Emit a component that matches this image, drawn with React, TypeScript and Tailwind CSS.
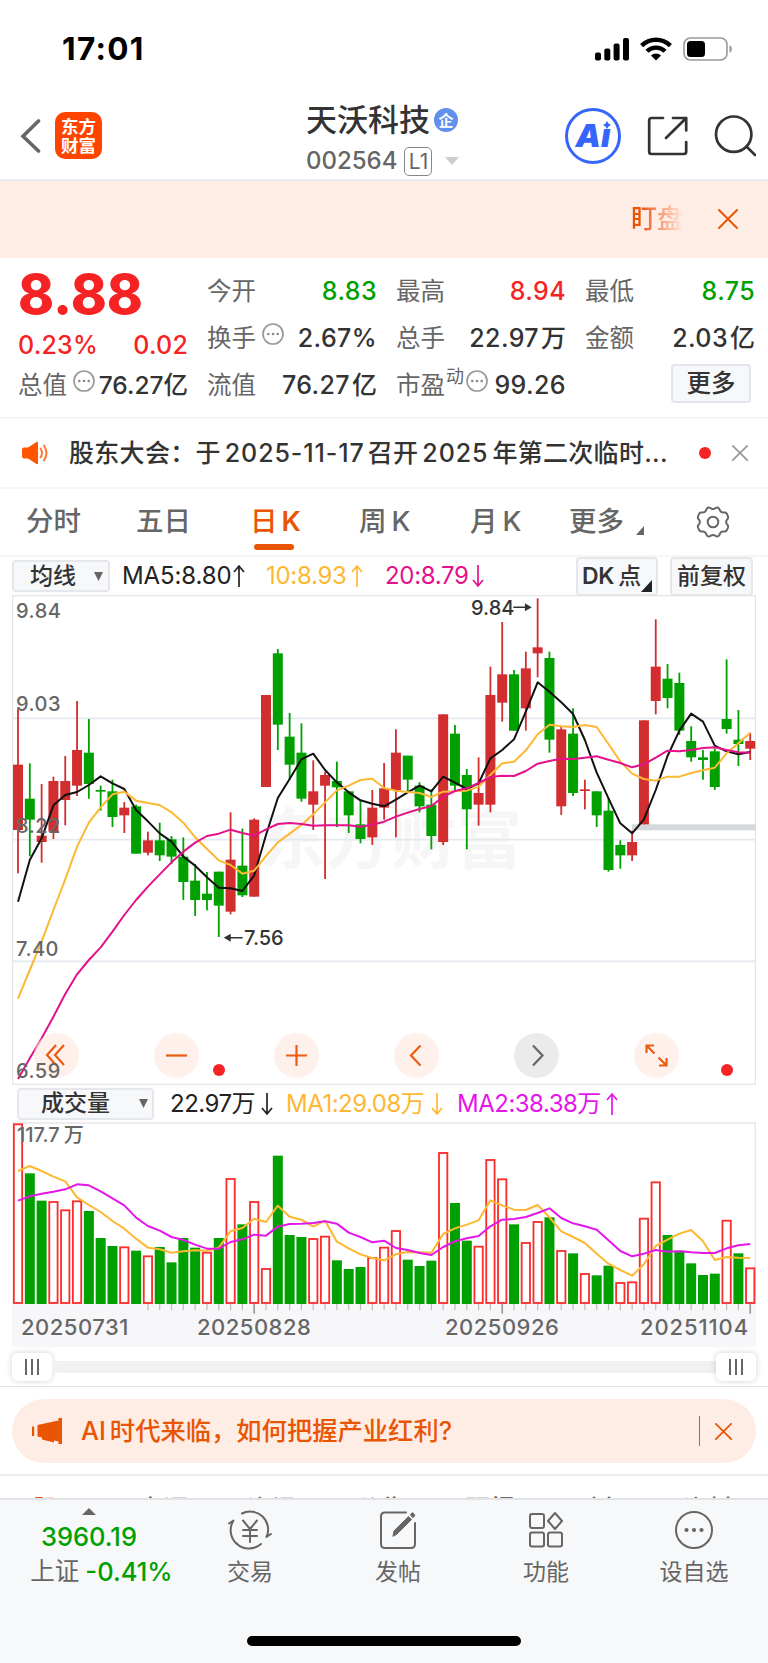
import type { ReactNode } from "react";

// [direction, high, bodyTop, bodyBottom, low]
type Candle = [string, number, number, number, number];

const STEP = 35.43;
const cx = (i: number) => 18 + STEP * i;

const candles: Candle[] = [
  ["r", 355, 524, 720, 850], ["g", 520, 626, 689, 799], ["r", 582, 737, 756, 818],
  ["r", 560, 573, 725, 747], ["r", 498, 573, 630, 706], ["r", 333, 480, 587, 618],
  ["g", 387, 488, 582, 626], ["g", 587, 600, 605, 662], ["g", 569, 604, 681, 711],
  ["r", 636, 653, 676, 729], ["g", 644, 649, 791, 791], ["r", 725, 751, 788, 796],
  ["g", 698, 751, 796, 813], ["g", 738, 748, 800, 822], ["g", 742, 800, 876, 930],
  ["g", 822, 872, 930, 978], ["g", 846, 911, 930, 961], ["g", 845, 845, 947, 1041],
  ["r", 667, 809, 965, 973], ["g", 716, 827, 916, 921], ["r", 685, 689, 920, 920],
  ["r", 315, 315, 591, 591], ["g", 177, 190, 404, 480], ["g", 369, 440, 524, 569],
  ["g", 400, 488, 626, 635], ["r", 511, 604, 644, 720], ["r", 545, 555, 587, 867],
  ["g", 515, 573, 592, 711], ["g", 604, 604, 676, 729], ["g", 630, 703, 747, 760],
  ["r", 600, 653, 742, 765], ["r", 519, 595, 653, 689], ["r", 418, 488, 600, 742],
  ["g", 497, 497, 569, 604], ["g", 577, 587, 649, 667], ["g", 598, 644, 738, 778],
  ["r", 373, 373, 756, 765], ["g", 405, 431, 587, 604], ["g", 537, 555, 658, 778],
  ["r", 502, 609, 644, 707], ["r", 230, 315, 644, 667], ["r", 96, 253, 338, 395],
  ["g", 240, 253, 422, 422], ["r", 185, 235, 355, 422], ["r", 25, 172, 190, 262],
  ["g", 185, 204, 449, 488], ["r", 410, 418, 649, 675], ["g", 355, 431, 609, 618],
  ["r", 569, 598, 603, 658], ["g", 604, 604, 676, 711], ["g", 625, 662, 840, 845],
  ["g", 751, 765, 796, 836], ["r", 722, 756, 796, 813], ["r", 391, 391, 703, 703],
  ["r", 88, 230, 333, 373], ["g", 222, 266, 324, 355], ["g", 248, 279, 422, 435],
  ["g", 409, 453, 502, 515], ["g", 480, 502, 510, 569], ["g", 475, 484, 591, 600],
  ["g", 208, 387, 417, 431], ["g", 360, 449, 462, 528], ["r", 428, 453, 476, 510],
];

const ma5 = [
  935, 810, 745, 646, 615, 606, 585, 559, 580, 597, 660, 694, 730, 755, 800, 827, 862, 893, 895, 903, 856,
  735, 624, 567, 508, 491, 540, 577, 607, 631, 641, 649, 629, 607, 587, 604, 560, 578, 597, 580, 505, 480,
  448, 365, 277, 305, 337, 372, 450, 548, 625, 700, 730, 688, 600, 498, 422, 371, 395, 467, 484, 493, 486,
];
const ma10 = [
  1226, 1140, 1055, 960, 868, 770, 698, 652, 613, 605, 632, 639, 645, 667, 698, 742, 777, 811, 825, 851, 842,
  798, 757, 731, 705, 673, 637, 601, 587, 570, 566, 594, 602, 606, 609, 621, 605, 604, 602, 590, 555, 520,
  515, 481, 433, 404, 409, 411, 405, 411, 462, 515, 551, 567, 572, 560, 560, 549, 541, 533, 490, 460, 428,
];
const ma20 = [
  1467, 1405, 1345, 1280, 1212, 1153, 1110, 1072, 1025, 975, 930, 890, 853, 817, 785, 758, 738, 731, 719, 729, 737,
  718, 702, 699, 702, 707, 706, 706, 706, 710, 704, 695, 680, 668, 657, 648, 620, 603, 595, 579, 561, 557,
  558, 543, 521, 513, 506, 507, 503, 499, 509, 519, 532, 523, 503, 482, 484, 480, 474, 472, 480, 487, 488,
];

const volumes = [
  "r131", "g280", "g362", "r364", "r389", "r362", "g393", "g474", "g498", "r500", "g512", "r527", "g501",
  "g547", "g474", "g503", "r516", "g474", "r295", "g433", "r364", "r565", "g227", "g465", "g471", "r475",
  "r468", "g541", "g567", "g561", "r532", "r501", "r451", "g539", "g558", "g542", "r217", "g369", "g482",
  "r498", "r238", "r296", "g433", "r487", "r424", "g412", "r511", "g520", "r580", "g586", "g557", "r607",
  "r605", "r414", "r305", "g465", "g512", "g550", "g585", "g581", "r420", "g520", "r563",
];
const volMa1 = [
  273, 258, 273, 290, 304, 352, 375, 396, 423, 446, 476, 503, 508, 518, 514, 511, 512, 503, 454, 444, 416,
  426, 377, 410, 419, 440, 422, 485, 505, 523, 534, 541, 523, 516, 517, 518, 462, 445, 434, 421, 361, 376,
  389, 390, 375, 412, 454, 471, 489, 521, 551, 570, 587, 553, 498, 479, 461, 450, 484, 540, 531, 533, 534,
];
const volMa2 = [
  362, 349, 341, 335, 328, 313, 316, 334, 355, 376, 413, 438, 452, 471, 480, 494, 506, 506, 486, 478, 464,
  467, 440, 432, 431, 429, 424, 431, 458, 471, 487, 482, 504, 510, 519, 525, 501, 484, 475, 468, 439, 419,
  417, 411, 399, 385, 414, 430, 439, 449, 481, 513, 529, 521, 510, 515, 514, 517, 519, 519, 505, 496, 492,
];

const toPoints = (ys: number[]) => ys.map((y, i) => `${cx(i)},${y}`).join(" ");

const Line = ({ ys, color }: { ys: number[]; color: string }) => (
  <polyline points={toPoints(ys)} fill="none" stroke={color} strokeWidth="6" strokeLinejoin="round" />
);

const Arrow = ({ down }: { down?: boolean }) => (
  <svg width="12" height="24" viewBox="0 0 12 24" className={down ? "rotate-180" : ""} fill="none" stroke="currentColor" strokeWidth="1.7">
    <path d="M6 23V2M1 8l5-6 5 6" />
  </svg>
);

const Close = ({ size, width = 2 }: { size: number; width?: number }) => (
  <svg width={size} height={size} viewBox="0 0 20 20" fill="none" stroke="currentColor" strokeWidth={width} strokeLinecap="round">
    <path d="M1 1l18 18M19 1L1 19" />
  </svg>
);

const Info = () => (
  <svg width="22" height="22" viewBox="0 0 22 22" fill="none" stroke="#999" strokeWidth="1.7" className="shrink-0">
    <circle cx="11" cy="11" r="10" />
    <g fill="#888" stroke="none">
      <circle cx="6.3" cy="11" r="1.3" />
      <circle cx="11" cy="11" r="1.3" />
      <circle cx="15.7" cy="11" r="1.3" />
    </g>
  </svg>
);

const StatusBar = () => (
  <div className="flex h-[98px] items-center justify-between pl-[62px] pr-[36px]">
    <div className="text-[31.5px] font-bold leading-none tracking-[1.3px] text-black">17:01</div>
    <div className="flex items-center gap-[11px]">
      <svg width="34" height="23" viewBox="0 0 34 23">
        <rect x="0" y="14.5" width="6" height="8" rx="2" />
        <rect x="9.3" y="10.5" width="6" height="12" rx="2" />
        <rect x="18.6" y="5.5" width="6" height="17" rx="2" />
        <rect x="28" y="0" width="6" height="22.5" rx="2" />
      </svg>
      <svg width="32" height="24" viewBox="0 0 32 24" fill="none" stroke="#000" strokeWidth="4.4">
        <path d="M1.6 8.6a20.5 20.5 0 0 1 28.8 0" />
        <path d="M7 14.3a12.8 12.8 0 0 1 18 0" />
        <path d="M16 23.5l-5-5a7 7 0 0 1 10 0z" fill="#000" stroke="none" />
      </svg>
      <svg width="49" height="24" viewBox="0 0 49 24">
        <rect x="1" y="1" width="43" height="22" rx="6.5" fill="none" stroke="#999" strokeWidth="1.6" />
        <rect x="4" y="4" width="18" height="16" rx="3.5" />
        <path d="M46.5 8.2c1.6.6 2.4 2 2.4 3.8s-.8 3.2-2.4 3.8z" fill="#999" />
      </svg>
    </div>
  </div>
);

const Header = () => (
  <div className="flex h-[83px] border-b-2 border-[#ececee] pl-[20px]">
    <svg width="22" height="34" viewBox="0 0 22 34" className="mt-[21px]" fill="none" stroke="#666" strokeWidth="3.6" strokeLinecap="round">
      <path d="M18.5 2L3 17.200 18.5 32" />
    </svg>
    <div className="ml-[13px] mt-[14px] flex h-[47px] w-[47px] flex-col items-center justify-center rounded-[10px] bg-[#ff4400] text-[17.5px] font-bold leading-[19px] text-white">
      <span>东方</span>
      <span>财富</span>
    </div>
    <div className="ml-[204px] mt-[4px] w-[186px]">
      <div className="flex h-[36px] items-center">
        <span className="text-[31px] font-medium leading-[36px] text-[#333]">天沃科技</span>
        <span className="ml-[4px] flex h-[24px] w-[24px] items-center justify-center rounded-full bg-[#628fea] text-[15px] font-bold leading-none text-white">企</span>
      </div>
      <div className="mt-[8px] flex h-[30px] items-center text-[#666]">
        <span className="text-[24px] font-medium leading-none">002564</span>
        <span className="ml-[7px] flex h-[29px] w-[28px] items-center justify-center rounded-[5px] border-[1.5px] border-[#888] text-[21px] leading-none">L1</span>
        <svg width="14" height="8" className="ml-[13px]">
          <path d="M0 0h14l-7 8z" fill="#ccc" />
        </svg>
      </div>
    </div>
    <div className="relative ml-[73px] mt-[10px] flex h-[56px] w-[56px] items-center justify-center rounded-full border-[3px] border-[#3565fb] text-[#3565fb]">
      <span className="text-[32px] font-black italic leading-none">Aı</span>
      <svg width="8" height="8" viewBox="0 0 8 8" className="absolute left-[35px] top-[10px]">
        <path d="M4 0l1.5 2.5L8 4 5.5 5.5 4 8 2.5 5.5 0 4l2.5-1.500z" fill="currentColor" />
      </svg>
    </div>
    <svg width="42" height="42" viewBox="0 0 42 42" className="ml-[26px] mt-[17px]" fill="none" stroke="#333" strokeWidth="2.7" strokeLinecap="round" strokeLinejoin="round">
      <path d="M16 3H4.5Q2.200 3 2.200 5.500V36.500Q2.200 39 4.500 39H37Q39.200 39 39.200 36.500V27" />
      <path d="M26 3H39.200V15.500M39.200 3L19 23" />
    </svg>
    <svg width="42" height="44" viewBox="0 0 42 44" className="ml-[25px] mt-[16px]" fill="none" stroke="#333" strokeWidth="2.7" strokeLinecap="round">
      <circle cx="19.7" cy="20.2" r="17.7" />
      <path d="M32.5 32.500L41 41" />
    </svg>
  </div>
);

const Label = ({ children }: { children: ReactNode }) => (
  <span className="text-[24.5px] leading-none text-[#666]">{children}</span>
);

const Stat = ({ label, value, unit, color = "text-[#333]", children }: { label: string; value: string; unit?: string; color?: string; children?: ReactNode }) => (
  <div className="flex items-center whitespace-nowrap">
    <Label>{label}</Label>
    {children}
    <span className={`ml-auto text-[25px] font-medium leading-none tracking-[0.4px] ${color}`}>
      {value}
      {unit && <span className="ml-[2px] tracking-normal">{unit}</span>}
    </span>
  </div>
);

const Quote = () => (
  <div className="grid h-[161px] grid-cols-[repeat(4,170px)] grid-rows-[repeat(3,47px)] gap-x-[19px] border-b-2 border-[#f5f5f5] pl-[18px] pt-[10px]">
    <div className="flex items-center pt-[6px] text-[54.5px] font-extrabold leading-none text-[#f52323]">8.88</div>
    <Stat label="今开" value="8.83" color="text-[#00a000]" />
    <Stat label="最高" value="8.94" color="text-[#f52323]" />
    <Stat label="最低" value="8.75" color="text-[#00a000]" />
    <div className="flex items-center justify-between pt-[14px] text-[25px] font-medium leading-none tracking-[0.2px] text-[#f52323]">
      <span>0.23%</span>
      <span>0.02</span>
    </div>
    <Stat label="换手" value="2.67%">
      <span className="-mt-[10px] ml-[6px]"><Info /></span>
    </Stat>
    <Stat label="总手" value="22.97" unit="万" />
    <Stat label="金额" value="2.03" unit="亿" />
    <div className="flex items-center whitespace-nowrap">
      <Label>总值</Label>
      <span className="-mt-[10px] ml-[6px]"><Info /></span>
      <span className="ml-auto text-[24.5px] font-medium leading-none text-[#333]">76.27亿</span>
    </div>
    <Stat label="流值" value="76.27" unit="亿" />
    <Stat label="市盈" value="99.26">
      <span className="-mt-[18px] ml-[1px] text-[18px] leading-none text-[#666]">动</span>
      <span className="-mt-[10px] ml-[2px]"><Info /></span>
    </Stat>
    <div className="ml-auto mr-[4px] mt-[2px] flex h-[39px] w-[80px] items-center justify-center rounded-[4px] border-2 border-[#e3e5ec] bg-[#f7f8fa] text-[24.5px] font-medium leading-none text-[#333]">
      更多
    </div>
  </div>
);

const News = () => (
  <div className="flex h-[70px] items-center border-b-2 border-[#f5f5f5] pl-[22px] pr-[20px]">
    <svg width="27" height="24" viewBox="0 0 27 24" className="shrink-0">
      <path d="M2 6.5H6L14.5 1Q16 .3 16 2V22Q16 23.7 14.5 23L6 17.500H2Q0 17.500 0 15.500V8.500Q0 6.500 2 6.500z" fill="#ff5500" />
      <path d="M18.5 7.500q3 4.500 0 9M22 4.500q5 7.500 0 15" fill="none" stroke="#ff7a33" strokeWidth="2" strokeLinecap="round" />
    </svg>
    <div className="ml-[20px] w-[606px] whitespace-nowrap text-[25px] font-medium leading-none tracking-[0.3px] text-[#333]">
      股东大会：于<span className="ml-[4px] mr-[3px] tracking-[0.900px]">2025-11-17</span>召开<span className="ml-[4px] mr-[4px] tracking-[0.9px]">2025</span>年第二次临时...
    </div>
    <div className="ml-[24px] h-[12px] w-[12px] rounded-full bg-[#f52323]" />
    <div className="ml-auto text-[#999]"><Close size={16} width={2.2} /></div>
  </div>
);

const Tabs = () => (
  <div className="flex h-[68px] items-center border-b-2 border-[#f5f5f5] pb-[1px] pl-[26px] pr-[38px] text-[27.5px] font-medium leading-none text-[#666]">
    <div className="w-[110px]">分时</div>
    <div className="w-[114px]">五日</div>
    <div className="relative w-[109px] text-[#ea5504]">
      日<span className="ml-[4px] font-semibold">K</span>
      <div className="absolute -bottom-[15px] left-[4px] h-[6px] w-[40px] rounded-[3px] bg-[#ea5504]" />
    </div>
    <div className="w-[111px]">周<span className="ml-[5px]">K</span></div>
    <div className="w-[99px]">月<span className="ml-[5px]">K</span></div>
    <div className="flex items-end">
      更多
      <svg width="8" height="9" className="ml-[12px]">
        <path d="M8 0v9H0z" fill="#666" />
      </svg>
    </div>
    <svg width="34" height="32" viewBox="0 0 34 32" className="ml-auto" fill="none" stroke="#666" strokeWidth="2" strokeLinejoin="round">
      <path d="M11 2.500Q12 1 13.500 1.700L15.500 2.700Q17 3.300 18.500 2.700L20.500 1.700Q22 1 23 2.500L24.500 5.200Q25.300 6.400 27 6.500L29 6.600Q30.300 6.800 31 8L32 10.500Q32.500 12 31.500 13L30.500 14.500Q29.800 16 30.500 17.500L31.500 19Q32.500 20 32 21.500L31 24Q30.300 25.200 29 25.400L27 25.500Q25.300 25.600 24.500 26.800L23 29.500Q22 31 20.500 30.300L18.500 29.300Q17 28.700 15.500 29.300L13.500 30.300Q12 31 11 29.500L9.500 26.800Q8.700 25.600 7 25.500L5 25.400Q3.700 25.200 3 24L2 21.500Q1.500 20 2.500 19L3.500 17.500Q4.200 16 3.500 14.500L2.500 13Q1.500 12 2 10.500L3 8Q3.700 6.800 5 6.600L7 6.500Q8.700 6.400 9.500 5.200z" />
      <circle cx="17" cy="16" r="5.3" />
    </svg>
  </div>
);

const SelectBtn = ({ label, className }: { label: string; className: string }) => (
  <div className={`flex h-[32px] shrink-0 items-center justify-between rounded-[4px] border-2 border-[#e6e7ec] bg-[#f7f8fa] text-[23px] font-medium leading-none tracking-normal text-[#333] ${className}`}>
    {label}
    <svg width="9" height="9"><path d="M0 0h9L4.5 9z" fill="#666" /></svg>
  </div>
);

const MaRow = () => (
  <div className="flex h-[38px] items-center whitespace-nowrap pl-[12px] text-[24px] leading-none tracking-[-0.3px]">
    <SelectBtn label="均线" className="w-[98px] pl-[16px] pr-[5px]" />
    <span className="ml-[12px] w-[106px] shrink-0 tracking-[-0.1px] text-[#222]">MA5:8.80</span>
    <span className="ml-[5px] w-[33px] shrink-0 text-[#222]"><Arrow /></span>
    <span className="w-[80px] shrink-0 text-[#fdb833]">10:8.93</span>
    <span className="ml-[5px] w-[34px] shrink-0 text-[#fdb833]"><Arrow /></span>
    <span className="w-[82px] shrink-0 text-[#e4118b]">20:8.79</span>
    <span className="ml-[5px] text-[#e4118b]"><Arrow down /></span>
    <div className="relative ml-auto flex h-[39px] w-[82px] shrink-0 items-center rounded-[4px] border-2 border-[#e6e7ec] bg-[#f7f8fa] pl-[4px] text-[23px] font-medium text-[#333]">
      <span className="font-semibold">DK</span><span className="ml-[4px]">点</span>
      <svg width="11" height="12" className="absolute bottom-[2px] right-[4px]"><path d="M11 0v12H0z" fill="#222" /></svg>
    </div>
    <div className="ml-[12px] mr-[15px] flex h-[39px] w-[83px] shrink-0 items-center justify-center rounded-[4px] border-2 border-[#e6e7ec] bg-[#f7f8fa] text-[23px] font-medium tracking-normal text-[#333]">
      前复权
    </div>
  </div>
);

const prices = [
  { v: "9.84", cls: "top-[3.5px]" },
  { v: "9.03", cls: "top-[97px]" },
  { v: "8.22", cls: "top-[219px]" },
  { v: "7.40", cls: "top-[342px]" },
  { v: "6.59", cls: "top-[464px]" },
];

const tools = [
  { d: "M22 12L13 22l9 10M30 12L21 22l9 10", cls: "" },
  { d: "M12 22.500h21", cls: "" },
  { d: "M12 22.500h21M22.500 12v21", cls: "" },
  { d: "M26.500 12.500L17 22.500l9.500 10", cls: "" },
  { d: "M19 12.500l9.500 10-9.500 10", cls: "gray" },
  { d: "M12.500 20V12.500H20M12.500 12.500L20.500 20.500M25 32.500H32.500V25M32.500 32.500L24.500 24.500", cls: "" },
];

const KChart = () => (
  <div className="relative ml-[12px] h-[490px] w-[744px]">
    <div className="absolute left-[248px] top-[207px] text-[65.5px] font-bold leading-[76px] text-[#f6f6f6]">东方财富</div>
    <svg width="744" height="490" viewBox="0 15 2232 1470" className="absolute inset-0">
      <path d="M0 385H2230M0 749H2230M0 1114H2230" stroke="#e4e9ef" strokeWidth="5" />
      <rect x="2" y="17" width="2228" height="1466" fill="none" stroke="#e4e4e6" strokeWidth="3.500" />
      <rect x="1860" y="703" width="372" height="18" fill="#d4d7db" />
      {candles.map(([dir, high, top, bottom, low], i) => (
        <g key={i} fill={dir === "r" ? "#d22d2f" : "#00a000"}>
          <rect x={cx(i) - 2.7} y={high} width="5.400" height={low - high} />
          <rect x={cx(i) - 15} y={top} width="30" height={bottom - top} />
        </g>
      ))}
      <Line ys={ma5} color="#111" />
      <Line ys={ma10} color="#fdb833" />
      <Line ys={ma20} color="#e4118b" />
      <g stroke="#333" strokeWidth="4.500" fill="#333">
        <path d="M645 1043H692M1504 52H1550" />
        <path d="M640 1043l14-8v16zM1555 52l-14-8v16z" />
      </g>
    </svg>
    <div className="absolute left-[459px] top-[1px] text-[20px] font-medium leading-[24px] text-[#333]">9.84</div>
    <div className="absolute left-[232px] top-[331px] text-[20px] font-medium leading-[24px] text-[#333]">7.56</div>
    <div className="absolute left-[22px] top-[437.5px] flex gap-[75px]">
      {tools.map((t) => (
        <svg key={t.d} width="45" height="45" viewBox="0 0 45 45">
          <circle cx="22.5" cy="22.5" r="22.5" fill={t.cls ? "#e0e0e0" : "#fde6da"} fillOpacity={t.cls ? 0.65 : 0.55} />
          <path d={t.d} fill="none" stroke={t.cls ? "#666" : "#ec5c10"} strokeWidth="2.2" />
        </svg>
      ))}
    </div>
    {prices.map((p) => (
      <div key={p.v} className={`absolute left-[4px] text-[20px] font-medium leading-[24px] tracking-[0.5px] text-[#666] ${p.cls}`}>{p.v}</div>
    ))}
    <div className="absolute left-[200.5px] top-[469px] h-[12px] w-[12px] rounded-full bg-[#f52323]" />
    <div className="absolute left-[708.5px] top-[469px] h-[12px] w-[12px] rounded-full bg-[#f52323]" />
  </div>
);

const VolumeRow = () => (
  <div className="flex h-[37px] items-center whitespace-nowrap pl-[17px] text-[24px] leading-none tracking-[-0.5px]">
    <SelectBtn label="成交量" className="w-[137px] pl-[22px] pr-[4px]" />
    <span className="ml-[16px] w-[84px] shrink-0 text-[#222]">22.97万</span>
    <span className="ml-[7px] w-[25px] shrink-0 text-[#222]"><Arrow down /></span>
    <span className="w-[138px] shrink-0 text-[#fdb833]">MA1:29.08万</span>
    <span className="ml-[7px] w-[26px] shrink-0 text-[#fdb833]"><Arrow down /></span>
    <span className="w-[142px] shrink-0 text-[#e516e8]">MA2:38.38万</span>
    <span className="ml-[7px] text-[#e516e8]"><Arrow /></span>
  </div>
);

const VolumeChart = () => (
  <div className="ml-[12px] w-[744px]">
    <div className="relative h-[182px]">
      <svg width="744" height="182" viewBox="0 126 2232 546">
        <path d="M0 129H2230V672" fill="none" stroke="#e6e6ea" strokeWidth="4" />
        {volumes.map((v, i) => {
          const top = Number(v.slice(1));
          return v[0] === "g" ? (
            <rect key={i} x={cx(i) - 15} y={top} width="30" height={672 - top} fill="#00a000" />
          ) : (
            <rect key={i} x={cx(i) - 12.5} y={top + 2} width="25" height={667 - top} fill="#fff" stroke="#fb2d2d" strokeWidth="5.500" />
          );
        })}
        <Line ys={volMa1} color="#fdb833" />
        <Line ys={volMa2} color="#e516e8" />
      </svg>
      <div className="absolute left-[5px] top-[1px] text-[20px] font-medium leading-[24px] text-[#666]">117.7<span className="ml-[4px]">万</span></div>
    </div>
    <div className="h-[43px] bg-[#f7f7fa]">
      <svg width="744" height="10" viewBox="0 672 2232 30" className="block">
        {volumes.slice(11).map((_, k) => {
          const i = k + 11;
          const major = i === 20 || i === 41 || i === 62;
          return <path key={i} d={`M${cx(i)} 672V${major ? 701 : 690}`} stroke={major ? "#999" : "#bbb"} strokeWidth={major ? 5 : 3.5} />;
        })}
      </svg>
      <div className="flex pl-[9px] pt-[1px] text-[22px] font-medium leading-[24px] tracking-[0.5px] text-[#666]">
        <span className="w-[176px]">20250731</span>
        <span className="w-[248px]">20250828</span>
        <span className="w-[195px]">20250926</span>
        <span className="tracking-[0.9px]">20251104</span>
      </div>
    </div>
  </div>
);

const Handle = () => (
  <div className="flex h-[28px] w-[40px] items-center justify-center gap-[4px] rounded-[6px] bg-white shadow-[0_0_6px_rgba(0,0,0,0.18)]">
    <i className="h-[16px] w-[2px] bg-[#666]" />
    <i className="h-[16px] w-[2px] bg-[#666]" />
    <i className="h-[16px] w-[2px] bg-[#666]" />
  </div>
);

const Slider = () => (
  <div className="flex h-[40px] items-center border-b border-[#e3e3e5] px-[12px]">
    <Handle />
    <div className="h-[12px] flex-1 bg-[#f1f1f4]" />
    <Handle />
  </div>
);

const AiBanner = () => (
  <div className="mx-[12px] mt-[12px] flex h-[64px] items-center rounded-[32px] bg-[#fdede4] pl-[20px] pr-[24px] text-[#ea5504]">
    <svg width="31" height="26" viewBox="0 0 31 26" fill="#ea5504">
      <rect x="0" y="8.5" width="2.2" height="9.5" />
      <path d="M5.500 7L26.500 2.500V0H30V26H26.500V23.500L22 22.500V24.500L10 21.500V19.500L5.500 18.500z" />
    </svg>
    <div className="ml-[18px] whitespace-nowrap text-[25.3px] font-medium leading-none">AI<span className="ml-[4px]">时代来临，如何把握产业红利?</span></div>
    <div className="ml-auto h-[30px] w-[1.5px] bg-[#ea5504]" />
    <div className="ml-[15px]"><Close size={17} width={2} /></div>
  </div>
);

const peekTabs = ["点评", "资讯", "公告", "研报", "财务", "资料"];

const navs = [
  {
    name: "交易",
    icon: (
      <>
        <path d="M8.500 35.500A18 18 0 0 1 5.500 12.500L1 15.500M14 5.500A18 18 0 0 1 38.500 29L43 26" />
        <path d="M8.500 35.500A18 18 0 0 0 33 36" />
        <path d="M15 12.500l7 8.500 7-8.500M22 21v13M15 22h14M15 28h14" />
      </>
    ),
  },
  {
    name: "发帖",
    icon: (
      <>
        <path d="M30 4.500H9Q5 4.500 5 8.500V36Q5 40 9 40H35Q39 40 39 36V15" />
        <path d="M17 28l1-5L32.500 8.500l3 3L21 26z" fill="#666" strokeWidth="1" />
        <path d="M34.500 6.500l2-2 2.500 3-2 2z" fill="#666" strokeWidth="1" />
      </>
    ),
  },
  {
    name: "功能",
    icon: (
      <>
        <rect x="6" y="6" width="14" height="14" rx="2" />
        <rect x="6" y="24.5" width="14" height="14" rx="2" />
        <rect x="24" y="24.5" width="14" height="14" rx="2" />
        <path d="M31 5l7 8-7 8-7-8z" />
      </>
    ),
  },
  {
    name: "设自选",
    icon: (
      <>
        <circle cx="22" cy="22" r="18" />
        <g fill="#666" stroke="none">
          <circle cx="14.5" cy="22" r="2.1" />
          <circle cx="22" cy="22" r="2.1" />
          <circle cx="29.5" cy="22" r="2.1" />
        </g>
      </>
    ),
  },
];

const BottomBar = () => (
  <div className="flex h-[165px] flex-col border-t-2 border-[#e2e3e6] bg-[#f7f8fa]">
    <div className="flex pl-[2px]">
      <div className="flex w-[174px] flex-col items-center pt-[8px] font-medium leading-none">
        <svg width="14" height="7"><path d="M7 0l7 7H0z" fill="#666" /></svg>
        <div className="mt-[9px] text-[25.5px] text-[#00a000]">3960.19</div>
        <div className="ml-[25px] mt-[9px] flex items-center gap-[6px] whitespace-nowrap">
          <span className="text-[24.5px] font-normal text-[#666]">上证</span>
          <span className="text-[25.5px] text-[#00a000]">-0.41%</span>
        </div>
      </div>
      {navs.map((n) => (
        <div key={n.name} className="flex w-[148px] flex-col items-center pt-[8px] text-[23px] leading-none text-[#666]">
          <svg width="44" height="44" viewBox="0 0 44 44" fill="none" stroke="#666" strokeWidth="2" strokeLinecap="round" strokeLinejoin="round">
            {n.icon}
          </svg>
          <span className="mt-[9px]">{n.name}</span>
        </div>
      ))}
    </div>
    <div className="mx-auto mb-[17px] mt-auto h-[10px] w-[274px] rounded-full bg-black" />
  </div>
);

export default function App() {
  return (
    <div className="h-[1663px] w-[768px] overflow-hidden bg-white font-['Inter','Noto_Sans_CJK_SC',sans-serif]">
      <StatusBar />
      <Header />
      <div className="flex h-[77px] items-center bg-[#fdede4] pb-[1px] pr-[30px]">
        <div className="ml-auto w-[54px] overflow-hidden whitespace-nowrap bg-gradient-to-r from-[#ea5504] from-20% to-[#fdede4] bg-clip-text text-[26px] font-medium leading-[32px] text-transparent">
          盯盘
        </div>
        <div className="ml-[33px] text-[#ea5504]"><Close size={20} width={2} /></div>
      </div>
      <Quote />
      <News />
      <Tabs />
      <MaRow />
      <KChart />
      <VolumeRow />
      <VolumeChart />
      <Slider />
      <AiBanner />
      <div className="mt-[11px] flex h-[24px] overflow-hidden border-t-2 border-[#eeeef0] pl-[33px] pt-[19px] text-[25px] font-medium leading-[28px] text-[#666]">
        <span className="w-[105px] shrink-0 text-[#ea5504]">股吧</span>
        {peekTabs.map((t) => (
          <span key={t} className="w-[109px] shrink-0">{t}</span>
        ))}
      </div>
      <BottomBar />
    </div>
  );
}
